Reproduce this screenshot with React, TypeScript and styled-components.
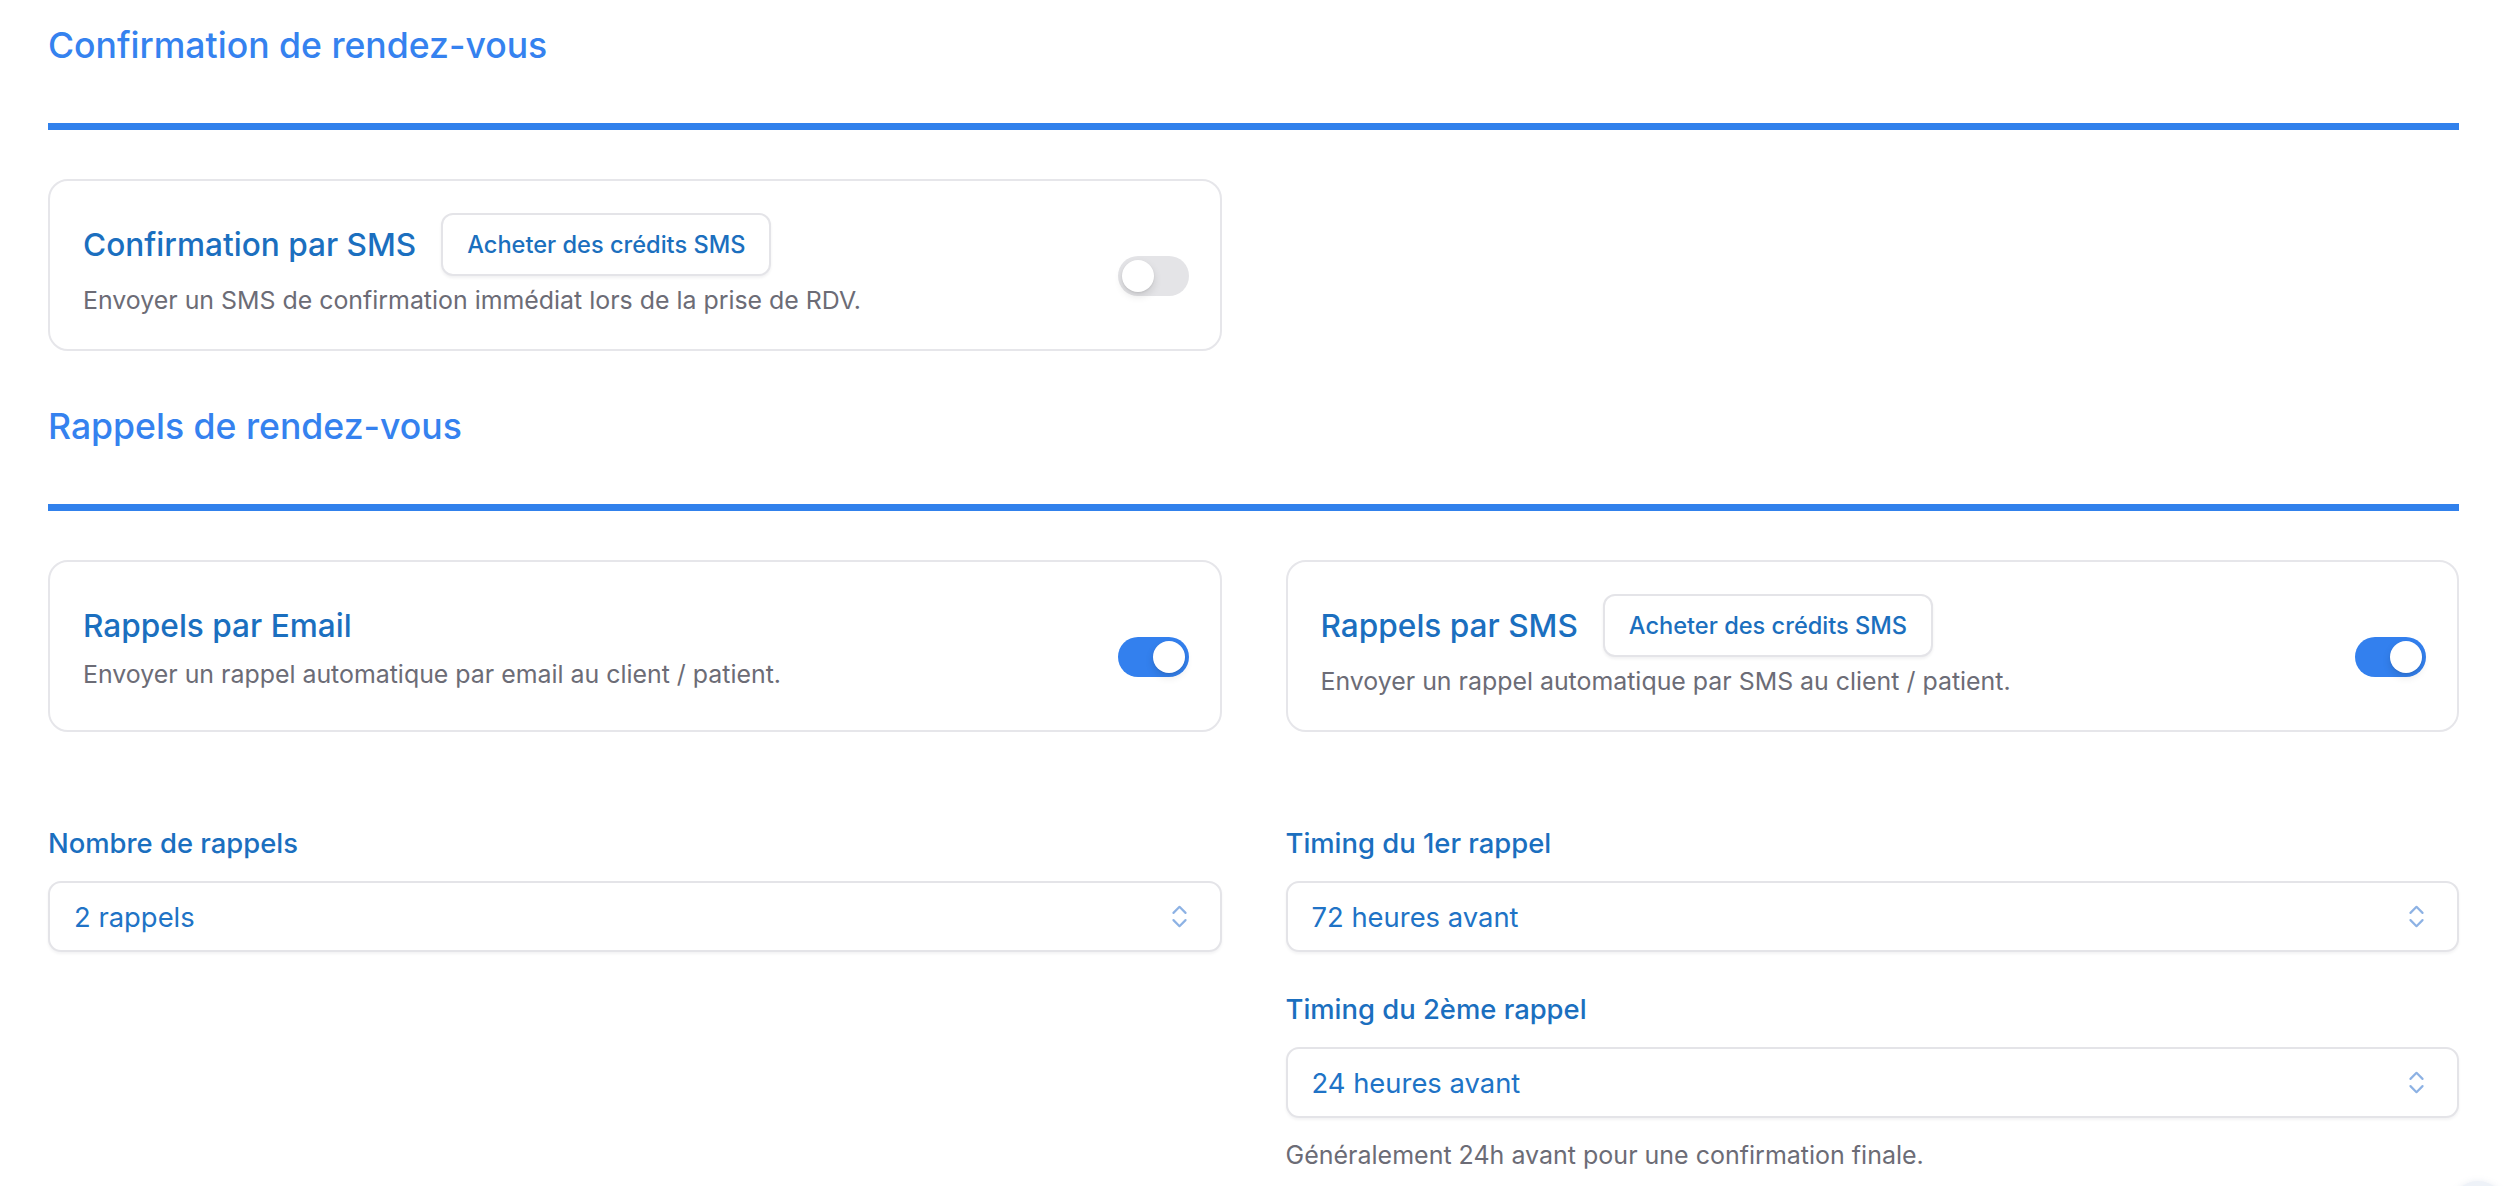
import React, { useState } from "react";
import styled, { createGlobalStyle } from "styled-components";
import { ChevronsUpDown } from "lucide-react";

const GlobalStyle = createGlobalStyle`
  html, body {
    margin: 0;
    padding: 0;
    background: #ffffff;
  }
  body {
    font-family: Inter, "Noto Sans", "Liberation Sans", sans-serif;
    -webkit-font-smoothing: antialiased;
  }
  * { box-sizing: border-box; }
`;

const Page = styled.main`
  padding: 21px 55px 0 48px;
  display: flex;
  flex-direction: column;
`;

const Section = styled.section<{ $gapAfter?: number }>`
  display: flex;
  flex-direction: column;
  margin-bottom: ${(p) => p.$gapAfter ?? 0}px;
`;

const SectionHeading = styled.h2`
  margin: 0 0 49px 0;
  padding-bottom: 53px;
  border-bottom: 7px solid #3181ec;
  font-size: 35.6px;
  line-height: 49px;
  font-weight: 500;
  color: #3582ef;
`;

const TwoCols = styled.div`
  display: grid;
  grid-template-columns: 1fr 1fr;
  column-gap: 64px;
  align-items: stretch;
`;

const Card = styled.div`
  display: flex;
  align-items: center;
  justify-content: space-between;
  gap: 24px;
  border: 2px solid #e6e6ea;
  border-radius: 20px;
  padding: 32px 31px 30px 33px;
  min-height: 172px;
  background: #fff;
`;

const CardText = styled.div`
  display: flex;
  flex-direction: column;
  gap: 5px;
`;

const TitleRow = styled.div`
  display: flex;
  align-items: center;
  gap: 25px;
  min-height: 48px;
`;

const CardTitle = styled.h3`
  margin: 0;
  font-size: 31.6px;
  line-height: 48px;
  font-weight: 500;
  color: #1b6fbf;
`;

const CardDesc = styled.p`
  margin: 0;
  font-size: 24.9px;
  line-height: 38px;
  color: #6c6c76;
`;

const OutlineButton = styled.button`
  height: 63px;
  padding: 0 24px;
  border: 2px solid #e4e4e8;
  border-radius: 12px;
  background: #fff;
  box-shadow: 0 2px 3px rgba(16, 24, 40, 0.06);
  font-family: inherit;
  font-size: 23.6px;
  font-weight: 500;
  color: #1b6fbe;
  cursor: pointer;
  white-space: nowrap;
`;

const SwitchTrack = styled.button<{ $on: boolean }>`
  flex: none;
  width: 71px;
  height: 40px;
  margin-top: 19px;
  border: none;
  border-radius: 999px;
  padding: 4px;
  background: ${(p) => (p.$on ? "#3380ee" : "#e4e4e7")};
  display: flex;
  justify-content: ${(p) => (p.$on ? "flex-end" : "flex-start")};
  align-items: center;
  cursor: pointer;
`;

const SwitchThumb = styled.span`
  width: 32px;
  height: 32px;
  border-radius: 50%;
  background: #fff;
  box-shadow: 0 4px 8px rgba(0, 0, 0, 0.12), 0 1px 2px rgba(0, 0, 0, 0.08);
`;

const FieldsArea = styled.div`
  margin-top: 92px;
  display: grid;
  grid-template-columns: 1fr 1fr;
  column-gap: 64px;
  align-items: start;
`;

const FieldColumn = styled.div`
  display: flex;
  flex-direction: column;
  gap: 38px;
`;

const Field = styled.div`
  display: flex;
  flex-direction: column;
`;

const FieldLabel = styled.label`
  font-size: 27.4px;
  line-height: 38px;
  font-weight: 500;
  color: #1b6fbf;
  margin-bottom: 19px;
`;

const SelectTrigger = styled.button`
  height: 71px;
  width: 100%;
  display: flex;
  align-items: center;
  justify-content: space-between;
  padding: 0 26px 0 24px;
  border: 2px solid #e4e4e8;
  border-radius: 13px;
  background: #fff;
  box-shadow: 0 2px 3px rgba(16, 24, 40, 0.05);
  font-family: inherit;
  font-size: 27.4px;
  color: #2073c6;
  cursor: pointer;
  text-align: left;
`;

const SelectIcon = styled(ChevronsUpDown)`
  color: #8db2e4;
  flex: none;
`;

const HelpText = styled.p`
  margin: 21px 0 0 0;
  font-size: 25px;
  line-height: 32px;
  color: #6c6c76;
`;

const FloatingBubble = styled.div`
  position: fixed;
  left: 2450px;
  top: 1181px;
  width: 56px;
  height: 56px;
  border-radius: 50%;
  background: #eef2f8;
  box-shadow: 0 0 6px rgba(120, 140, 180, 0.15);
`;

type ToggleProps = { initial: boolean };

const Toggle: React.FC<ToggleProps> = ({ initial }) => {
  const [on, setOn] = useState(initial);
  return (
    <SwitchTrack $on={on} role="switch" aria-checked={on} onClick={() => setOn(!on)}>
      <SwitchThumb />
    </SwitchTrack>
  );
};

type SettingCardProps = {
  title: string;
  description: string;
  withButton?: boolean;
  on: boolean;
};

const SettingCard: React.FC<SettingCardProps> = ({ title, description, withButton, on }) => (
  <Card>
    <CardText>
      <TitleRow>
        <CardTitle>{title}</CardTitle>
        {withButton && <OutlineButton>Acheter des crédits SMS</OutlineButton>}
      </TitleRow>
      <CardDesc>{description}</CardDesc>
    </CardText>
    <Toggle initial={on} />
  </Card>
);

const SelectField: React.FC<{ label: string; value: string }> = ({ label, value }) => (
  <Field>
    <FieldLabel>{label}</FieldLabel>
    <SelectTrigger type="button">
      <span>{value}</span>
      <SelectIcon size={29} strokeWidth={1.8} />
    </SelectTrigger>
  </Field>
);

export default function App() {
  return (
    <>
      <GlobalStyle />
      <Page>
        <Section $gapAfter={51}>
          <SectionHeading>Confirmation de rendez-vous</SectionHeading>
          <TwoCols>
            <SettingCard
              title="Confirmation par SMS"
              description="Envoyer un SMS de confirmation immédiat lors de la prise de RDV."
              withButton
              on={false}
            />
          </TwoCols>
        </Section>
        <Section>
          <SectionHeading>Rappels de rendez-vous</SectionHeading>
          <TwoCols>
            <SettingCard
              title="Rappels par Email"
              description="Envoyer un rappel automatique par email au client / patient."
              on
            />
            <SettingCard
              title="Rappels par SMS"
              description="Envoyer un rappel automatique par SMS au client / patient."
              withButton
              on
            />
          </TwoCols>
          <FieldsArea>
            <FieldColumn>
              <SelectField label="Nombre de rappels" value="2 rappels" />
            </FieldColumn>
            <FieldColumn>
              <SelectField label="Timing du 1er rappel" value="72 heures avant" />
              <Field>
                <SelectField label="Timing du 2ème rappel" value="24 heures avant" />
                <HelpText>Généralement 24h avant pour une confirmation finale.</HelpText>
              </Field>
            </FieldColumn>
          </FieldsArea>
        </Section>
      </Page>
      <FloatingBubble />
    </>
  );
}
